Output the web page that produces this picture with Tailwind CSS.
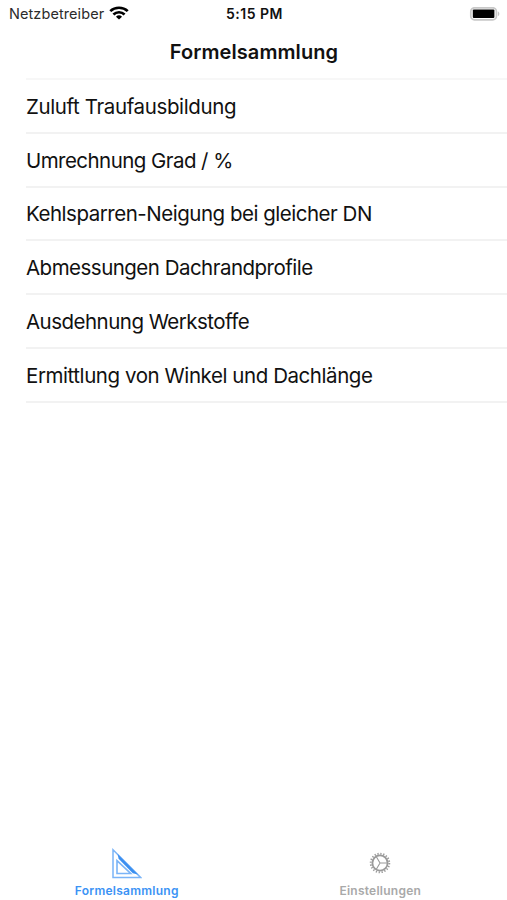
<!DOCTYPE html>
<html lang="de">
<head>
    <meta charset="UTF-8">
    <meta name="viewport" content="width=device-width, initial-scale=1.0">
    <title>Formelsammlung</title>
    <script src="https://cdn.jsdelivr.net/npm/@tailwindcss/browser@4"></script>
</head>
<body class="bg-white font-['Inter','Liberation_Sans',sans-serif] text-[#111111]">
    <div class="flex flex-col h-[900px] overflow-hidden">
        <!-- Status Bar -->
        <div class="grid grid-cols-3 items-center h-[27px] pl-[9px] pr-[7px] shrink-0">
            <div class="flex items-center gap-[5px]">
                <span class="text-[14.5px] tracking-[0.08px] text-[#2b2b2b] whitespace-nowrap">Netzbetreiber</span>
                <svg class="w-[20px] h-[14px] mb-[2px] shrink-0" viewBox="0 0 19 14" fill="none" stroke="#000" stroke-width="2.5" preserveAspectRatio="none">
                    <path d="M1.2 5.2a11.8 11.8 0 0 1 16.6 0" />
                    <path d="M4.2 8.5a7.5 7.5 0 0 1 10.6 0" />
                    <path d="M9.5 13.6L6.6 10.8a4.1 4.1 0 0 1 5.8 0z" fill="#000" stroke="none" />
                </svg>
            </div>
            <span class="pb-px text-[14px] font-semibold tracking-[0.5px] text-center whitespace-nowrap">5:15 PM</span>
            <svg class="w-[31px] h-[14px] justify-self-end" viewBox="0 0 31 14">
                <rect x="1.8" y="0.8" width="25.6" height="12" rx="3.6" fill="#fff" stroke="#c8c8c8" stroke-width="1.7" />
                <rect x="3.8" y="2.5" width="21.6" height="8.5" rx="1" fill="#000" />
                <path d="M28.9 4.6v4.6c1.9-.7 1.9-3.9 0-4.6z" fill="#c4c4c4" />
            </svg>
        </div>

        <!-- Navigation Bar -->
        <h1 class="h-[51px] pb-px pl-px shrink-0 flex items-center justify-center text-[20px] tracking-[0.08px] font-semibold">Formelsammlung</h1>

        <!-- List -->
        <ul class="ml-[26px] shrink-0 border-t-2 border-[#f7f7f7] text-[20.5px] whitespace-nowrap">
            <li class="h-[53.75px] pt-[3px] flex items-center border-b-2 border-[#f2f2f2]"><span class="tracking-[-0.38px]">Zuluft Traufausbildung</span></li>
            <li class="h-[53.75px] pt-[3px] flex items-center border-b-2 border-[#f2f2f2]"><span class="tracking-[-0.55px]">Umrechnung Grad / %</span></li>
            <li class="h-[53.75px] pt-[2px] flex items-center border-b-2 border-[#f2f2f2]"><span class="tracking-[-0.48px]">Kehlsparren-Neigung bei gleicher DN</span></li>
            <li class="h-[53.75px] pt-[3px] flex items-center border-b-2 border-[#f2f2f2]"><span class="tracking-[-0.52px]">Abmessungen Dachrandprofile</span></li>
            <li class="h-[53.75px] pt-[3px] flex items-center border-b-2 border-[#f2f2f2]"><span class="tracking-[-0.52px]">Ausdehnung Werkstoffe</span></li>
            <li class="h-[53.75px] pt-[3px] flex items-center border-b-2 border-[#f2f2f2]"><span class="tracking-[-0.43px]">Ermittlung von Winkel und Dachlänge</span></li>
        </ul>

        <!-- Tab Bar -->
        <nav class="mt-auto h-[60px] shrink-0 grid grid-cols-2 text-[12px] font-semibold tracking-[0.25px] leading-[16px]">
            <a class="flex flex-col items-center pt-[8px] text-[#3b93f5]">
                <svg class="w-[30px] h-[31px]" viewBox="0 0 30 31" fill="none" stroke="#7ab4f7">
                    <path d="M1 1.8L28.6 29.5H1z" stroke-width="1.5" />
                    <path d="M5 12.6L18.7 25.5H5z" stroke-width="1.6" />
                    <path d="M5.6 6L6.6 10.8 20.8 25.2 26 26.5z" fill="#3b8ff0" stroke="none" />
                </svg>
                <span class="mt-[4px]">Formelsammlung</span>
            </a>
            <a class="flex flex-col items-center pt-[12px] text-[#a9a9a9]">
                <svg class="w-[22px] h-[22px]" viewBox="-11 -11 22 22" fill="none" stroke="#9a9a9a">
                    <circle r="7.6" stroke-width="1.8" />
                    <circle r="9.3" stroke-width="1.9" stroke-dasharray="1.3 1.622" />
                    <path d="M0 0H7.5M0 0L-3.8-6.5M0 0L-3.8 6.5" stroke-width="1.1" />
                </svg>
                <span class="mt-[9px]">Einstellungen</span>
            </a>
        </nav>
    </div>
</body>
</html>
